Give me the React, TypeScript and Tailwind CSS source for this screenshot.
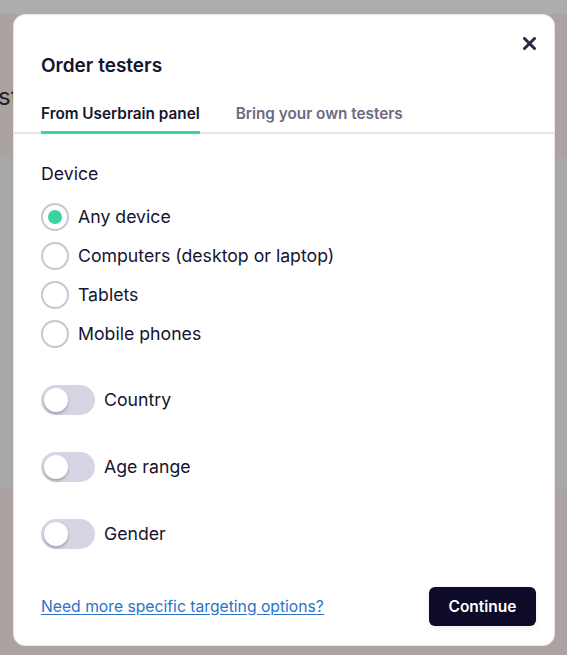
import React from "react";

const font = { fontFamily: "Inter, 'Noto Sans', sans-serif" };

function Radio({ checked, label }: { checked?: boolean; label: string }) {
  return (
    <div className="flex h-[39px] items-center gap-[9px]">
      <span className="flex h-[28px] w-[28px] items-center justify-center rounded-full border-2 border-[#c8c6d3] bg-white">
        {checked && <span className="h-[14px] w-[14px] rounded-full bg-[#3ad49e]" />}
      </span>
      <span className="text-[17.7px] leading-[24px] text-[#16142e]">{label}</span>
    </div>
  );
}

function Toggle({ label }: { label: string }) {
  return (
    <div className="flex h-[30px] items-center gap-[9px]">
      <span className="relative flex h-[30px] w-[54px] items-center rounded-full bg-[#d6d5e4] px-[3px]">
        <span className="h-[24px] w-[24px] rounded-full bg-white shadow-[0_2px_3px_rgba(0,0,0,0.25)]" />
      </span>
      <span className="text-[17.7px] leading-[24px] text-[#16142e]">{label}</span>
    </div>
  );
}

export default function App() {
  return (
    <div className="relative h-[655px] w-[567px] overflow-hidden" style={font}>
      <div className="flex h-full flex-col">
        <div className="h-[14px] bg-[#adadad]" />
        <div className="flex h-[143px] items-start bg-[#aaa3a1]">
          <span className="ml-[-2px] mt-[68px] text-[24px] leading-[30px] text-[#24212f]">st</span>
        </div>
        <div className="h-[331px] bg-[#a8a8a8]" />
        <div className="flex-1 bg-[#aaa3a1]" />
      </div>

      <div className="absolute left-[13px] top-[14px] flex h-[632px] w-[542px] flex-col rounded-[12px] border border-[#eee4e2] bg-white pt-[37px]">
        <button className="absolute right-[18px] top-[21px] flex h-[14px] w-[14px] items-center justify-center">
          <svg width="13" height="13" viewBox="0 0 13 13">
            <path d="M1.5 1.5 L11.5 11.5 M11.5 1.5 L1.5 11.5" stroke="#2a2840" strokeWidth="3" strokeLinecap="round" />
          </svg>
        </button>
        <h2 className="px-[27px] text-[19px] font-semibold leading-[28px] text-[#16142e]">Order testers</h2>

        <div className="mt-[24px] flex gap-[36px] border-b-2 border-[#e6e6e9] px-[27px]">
          <div className="mb-[-2px] border-b-[3px] border-[#3ad6a0] pb-[7px] text-[15.3px] font-semibold leading-[20px] text-[#16142e]">
            From Userbrain panel
          </div>
          <div className="pb-[7px] text-[15.3px] font-semibold leading-[20px] text-[#6c6a7f]">Bring your own testers</div>
        </div>

        <div className="flex flex-col px-[27px]">
          <div className="mt-[28px] text-[17.7px] leading-[24px] text-[#16142e]">Device</div>
          <div className="mt-[11px] flex flex-col">
            <Radio checked label="Any device" />
            <Radio label="Computers (desktop or laptop)" />
            <Radio label="Tablets" />
            <Radio label="Mobile phones" />
          </div>
          <div className="mt-[32px] flex flex-col gap-[37px]">
            <Toggle label="Country" />
            <Toggle label="Age range" />
            <Toggle label="Gender" />
          </div>
        </div>

        <div className="mt-[38px] flex items-center justify-between pl-[27px] pr-[18px]">
          <a href="#" className="text-[15.7px] leading-[20px] text-[#2a73c7] underline underline-offset-2">
            Need more specific targeting options?
          </a>
          <button className="h-[39px] w-[107px] rounded-[6px] bg-[#0e0b28] text-[15.5px] font-semibold text-white shadow-[0_2px_6px_rgba(0,0,0,0.08)]">
            Continue
          </button>
        </div>
      </div>
    </div>
  );
}
